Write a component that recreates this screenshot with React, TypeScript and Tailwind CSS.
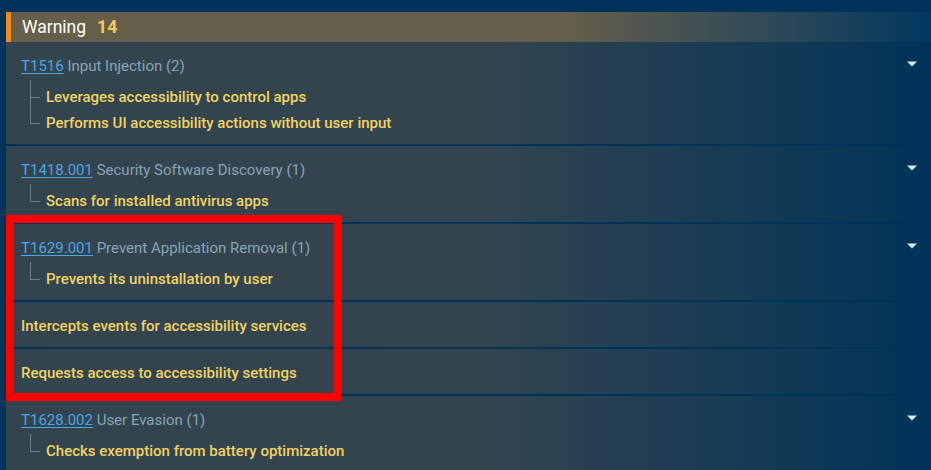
import React from "react";

type Row =
  | { id: string; name: string; count: number; children: string[] }
  | { text: string };

const rows: Row[] = [
  {
    id: "T1516",
    name: "Input Injection",
    count: 2,
    children: [
      "Leverages accessibility to control apps",
      "Performs UI accessibility actions without user input",
    ],
  },
  {
    id: "T1418.001",
    name: "Security Software Discovery",
    count: 1,
    children: ["Scans for installed antivirus apps"],
  },
  {
    id: "T1629.001",
    name: "Prevent Application Removal",
    count: 1,
    children: ["Prevents its uninstallation by user"],
  },
  { text: "Intercepts events for accessibility services" },
  { text: "Requests access to accessibility settings" },
  {
    id: "T1628.002",
    name: "User Evasion",
    count: 1,
    children: ["Checks exemption from battery optimization"],
  },
];

function Caret() {
  return (
    <svg width="10" height="6" viewBox="0 0 10 6" className="block">
      <path d="M0 0.5 H10 L5 5.5 Z" fill="#d6ebfb" />
    </svg>
  );
}

export default function App() {
  return (
    <div
      className="relative min-h-screen bg-[#003359] pt-3 pl-[6px] overflow-hidden"
      style={{ fontFamily: "Roboto, 'Noto Sans', sans-serif" }}
    >
      <div className="flex flex-col gap-[2px]">
        <div>
          <div className="h-[30px] flex items-center border-l-[5px] border-[#f5891f] pl-[11px] bg-[linear-gradient(to_right,#665e4a_60%,#023860)]">
            <span className="text-white text-[17.5px]">Warning</span>
            <span className="ml-[11px] text-[#f2cb5a] text-[17.5px] font-bold">14</span>
          </div>
          {rows.slice(0, 1).map((r, i) => (
            <RowView key={i} row={r} />
          ))}
        </div>
        {rows.slice(1).map((r, i) => (
          <RowView key={i} row={r} />
        ))}
      </div>
      <div className="absolute left-[6px] top-[215px] w-[336px] h-[186px] border-[8px] border-[#ff0000]" />
    </div>
  );
}

function RowView({ row }: { row: Row }) {
  const bg = "bg-[linear-gradient(to_right,#33444e_52%,#003359)]";
  if ("text" in row) {
    return (
      <div className={`${bg} pl-[15px] pr-[14px] pt-3 pb-[9px]`}>
        <div className="h-6 flex items-center text-[15px] font-medium text-[#f0d264]">
          {row.text}
        </div>
      </div>
    );
  }
  return (
    <div className={`${bg} pl-[15px] pr-[14px] pt-3 pb-[8px]`}>
      <div className="h-6 flex items-center justify-between">
        <div className="text-[15px]">
          <a className="text-[#4aa6e6] underline underline-offset-2">{row.id}</a>
          <span className="text-[#88a3b6]">
            {" "}
            {row.name} ({row.count})
          </span>
        </div>
        <div className="-mt-[4px]">
          <Caret />
        </div>
      </div>
      <div className="mt-[6px]">
        {row.children.map((c, i) => {
          const last = i === row.children.length - 1;
          const first = i === 0;
          let style: React.CSSProperties;
          if (first && last) style = { top: -4, height: "calc(50% + 4px)" };
          else if (first) style = { top: -4, bottom: 0 };
          else if (last) style = { top: 0, height: "50%" };
          else style = { top: 0, bottom: 0 };
          return (
            <div key={i} className="relative h-[26px] flex items-center pl-[25px]">
              <span className="absolute left-[9px] w-px bg-[#6c808c]" style={style} />
              <span className="absolute left-[9px] top-1/2 w-[10px] h-px bg-[#6c808c]" />
              <span className="text-[15px] font-medium text-[#f0d264]">{c}</span>
            </div>
          );
        })}
      </div>
    </div>
  );
}
